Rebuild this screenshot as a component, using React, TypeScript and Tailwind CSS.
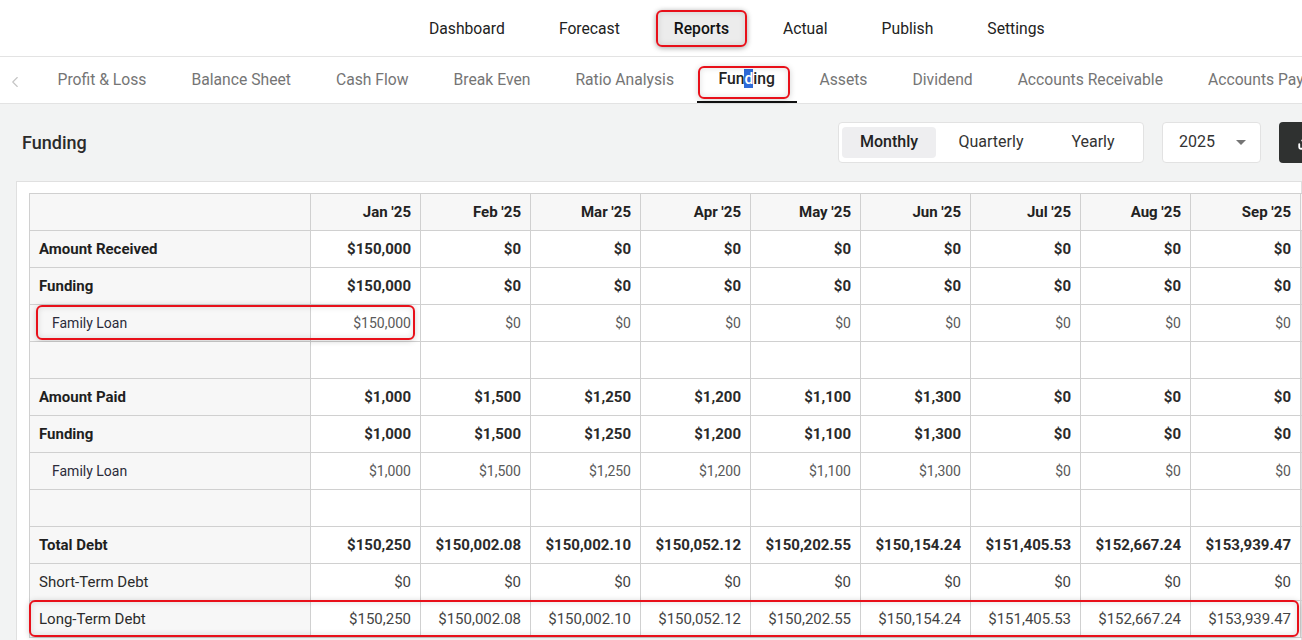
import { ChevronLeft, Download } from "lucide-react";

const topNav = ["Dashboard", "Forecast", "Reports", "Actual", "Publish", "Settings"];
const subNav = [
  "Profit & Loss",
  "Balance Sheet",
  "Cash Flow",
  "Break Even",
  "Ratio Analysis",
  "Funding",
  "Assets",
  "Dividend",
  "Accounts Receivable",
  "Accounts Payable",
];
const months = ["Jan '25", "Feb '25", "Mar '25", "Apr '25", "May '25", "Jun '25", "Jul '25", "Aug '25", "Sep '25", "Oct '25"];

const zeros = Array(10).fill("$0");
const received = ["$150,000", ...Array(9).fill("$0")];
const paid = ["$1,000", "$1,500", "$1,250", "$1,200", "$1,100", "$1,300", "$0", "$0", "$0", "$0"];
const debt = [
  "$150,250",
  "$150,002.08",
  "$150,002.10",
  "$150,052.12",
  "$150,202.55",
  "$150,154.24",
  "$151,405.53",
  "$152,667.24",
  "$153,939.47",
  "$155,211.70",
];

type Row = { label?: string; kind: "bold" | "child" | "plain" | "empty"; values?: string[]; mark?: "first" | "full" };

const rows: Row[] = [
  { label: "Amount Received", kind: "bold", values: received },
  { label: "Funding", kind: "bold", values: received },
  { label: "Family Loan", kind: "child", values: received, mark: "first" },
  { kind: "empty" },
  { label: "Amount Paid", kind: "bold", values: paid },
  { label: "Funding", kind: "bold", values: paid },
  { label: "Family Loan", kind: "child", values: paid },
  { kind: "empty" },
  { label: "Total Debt", kind: "bold", values: debt },
  { label: "Short-Term Debt", kind: "plain", values: zeros },
  { label: "Long-Term Debt", kind: "plain", values: debt, mark: "full" },
];

function RedMark({ className }: { className: string }) {
  return (
    <div
      className={`pointer-events-none absolute rounded-[6px] border-2 border-[#e8101a] shadow-[inset_0_0_6px_rgba(0,0,0,0.12),0_1px_6px_rgba(0,0,0,0.18)] ${className}`}
    />
  );
}

export default function App() {
  return (
    <div className="w-[1302px] h-[640px] overflow-hidden bg-[#f2f3f3] font-['Roboto','Liberation_Sans',sans-serif] text-[#222]">
      {/* Top navigation */}
      <div className="h-[57px] bg-white border-b border-[#e3e3e3] flex items-center pl-[411px] pt-[1px] gap-[18px]">
        {topNav.map((item) =>
          item === "Reports" ? (
            <div
              key={item}
              className="relative shrink-0 h-[37px] px-[18px] flex items-center rounded-[6px] bg-[#ececec] text-[15.7px] font-medium text-[#111] shadow-[0_1px_5px_rgba(0,0,0,0.2)]"
            >
              {item}
              <RedMark className="inset-0" />
            </div>
          ) : (
            <div key={item} className="shrink-0 h-[37px] px-[18px] flex items-center text-[15.7px] text-[#222]">
              {item}
            </div>
          )
        )}
      </div>

      {/* Sub navigation */}
      <div className="h-[47px] bg-white border-b border-[#e3e3e3] flex items-stretch whitespace-nowrap">
        <div className="shrink-0 w-[35px] flex items-center justify-center text-[#c4c4c4]">
          <ChevronLeft className="w-[18px] h-[18px] ml-[-6px] mt-[4px]" strokeWidth={1.5} />
        </div>
        {subNav.map((item) =>
          item === "Funding" ? (
            <div key={item} className="relative shrink-0 px-[22px] flex items-center border-b-2 border-[#111] text-[15.7px] font-medium text-[#222]">
              <span>
                Fun<span className="bg-[#2f6ad8] text-white">d</span>ing
              </span>
              <RedMark className="left-[1px] right-[7px] top-[9px] bottom-[2px]" />
            </div>
          ) : (
            <div key={item} className="shrink-0 px-[22.5px] flex items-center text-[15.7px] text-[#757575]">
              {item}
            </div>
          )
        )}
      </div>

      {/* Title + controls */}
      <div className="h-[77px] flex items-center pl-[22px] pb-[1px]">
        <div className="text-[18px] text-[#2b2b2b] font-medium">Funding</div>
        <div className="ml-auto flex items-center gap-[18px] mr-[-30px]">
          <div className="h-[41px] bg-white border border-[#e2e2e2] rounded-[4px] flex items-center px-[3px] gap-[8px]">
            <div className="w-[94px] h-[31px] rounded-[4px] bg-[#eeeef0] flex items-center justify-center text-[16px] font-medium text-[#222]">
              Monthly
            </div>
            <div className="w-[94px] h-[31px] flex items-center justify-center text-[16px] text-[#333]">Quarterly</div>
            <div className="w-[94px] h-[31px] flex items-center justify-center text-[16px] text-[#333]">Yearly</div>
          </div>
          <div className="w-[99px] h-[41px] bg-white border border-[#e2e2e2] rounded-[4px] flex items-center pl-[16px] pr-[14px] text-[16px] text-[#333]">
            <span>2025</span>
            <span className="ml-auto w-0 h-0 border-l-[5px] border-r-[5px] border-t-[5px] border-l-transparent border-r-transparent border-t-[#757575]" />
          </div>
          <div className="w-[53px] h-[41px] bg-[#2f3130] rounded-[4px] flex items-center justify-center text-white">
            <Download className="w-[18px] h-[18px]" strokeWidth={2.5} />
          </div>
        </div>
      </div>

      {/* Table card */}
      <div className="ml-[16px] bg-white border border-[#e0e0e0] pl-[12px] pt-[11px] h-[470px]">
        <div className="relative">
          <table className="border-collapse text-[15px] whitespace-nowrap">
            <thead>
              <tr className="h-[37px] bg-[#f7f7f7]">
                <th className="w-[281px] min-w-[281px] border border-[#d0d0d0]" />
                {months.map((m) => (
                  <th key={m} className="w-[110px] min-w-[110px] border border-[#d0d0d0] text-right pr-[9px] font-bold text-[#222]">
                    {m}
                  </th>
                ))}
              </tr>
            </thead>
            <tbody>
              {rows.map((r, i) => {
                const labelCls =
                  r.kind === "bold"
                    ? "pl-[9px] font-bold text-[#1f1f1f]"
                    : r.kind === "child"
                    ? "pl-[22px] text-[14px] text-[#2b2b3a]"
                    : "pl-[9px] text-[#2b2b2b]";
                const valCls =
                  r.kind === "bold"
                    ? "font-bold text-[#2a2a2a]"
                    : r.kind === "child"
                    ? "text-[14px] text-[#5a5a5a]"
                    : "text-[#444]";
                return (
                  <tr key={i} className="h-[37px]">
                    <td className={`relative bg-[#f7f7f7] border border-[#d0d0d0] text-left ${labelCls}`}>
                      {r.label}
                      {r.mark === "first" && <RedMark className="left-[6px] right-[-105px] top-0 bottom-[1px]" />}
                    </td>
                    {(r.values ?? Array(10).fill("")).map((v, j) => (
                      <td key={j} className={`border border-[#d0d0d0] text-right pr-[9px] ${valCls}`}>
                        {v}
                      </td>
                    ))}
                  </tr>
                );
              })}
            </tbody>
          </table>
          <RedMark className="left-0 w-[1270px] top-[407px] h-[37px]" />
        </div>
      </div>
    </div>
  );
}
